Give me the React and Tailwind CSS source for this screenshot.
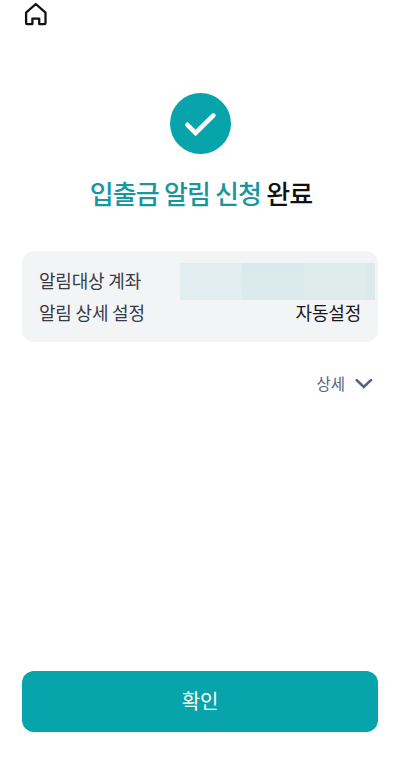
import React from 'react';

const HomeIcon = () => (
  <svg width="24" height="24" viewBox="0 0 24 24" fill="none" stroke="#111214" strokeWidth="2.3" strokeLinejoin="round">
    <path d="M2.1 10.6 11.8 2l9.7 8.6v10.3a1.2 1.2 0 0 1-1.2 1.2h-5.1v-5.5H8.4v5.5H3.3a1.2 1.2 0 0 1-1.2-1.2z" />
  </svg>
);

const CheckIcon = () => (
  <svg width="61" height="61" viewBox="0 0 61 61" fill="none" stroke="#ffffff" strokeWidth="4.6" strokeLinecap="round" strokeLinejoin="miter">
    <path d="M17.4 31.8 25.6 40 43.4 22.4" />
  </svg>
);

const ChevronIcon = () => (
  <svg width="18" height="12" viewBox="0 0 18 12" fill="none" stroke="#56637a" strokeWidth="2.7" strokeLinecap="round" strokeLinejoin="miter">
    <path d="M1.7 3.1 8.8 9.9l7.1-6.8" />
  </svg>
);

// Hidden account number, covered with pale tiles
const MaskedAccount = () => (
  <div className="absolute left-[158px] top-3 flex h-[37px] w-[195px]">
    <div className="w-[62px] bg-[#e1edee]"></div>
    <div className="w-[62px] bg-linear-to-b from-[#d8e8ee] to-[#dceceb]"></div>
    <div className="w-[62px] bg-[#deecec]"></div>
    <div className="w-[9px] bg-[#dceaea]"></div>
  </div>
);

const App = () => {
  return (
    <div className="flex h-[760px] w-[400px] flex-col bg-white px-[22px] font-['Noto_Sans_CJK_KR',sans-serif]">
      <header className="flex h-[93px] pl-0.5 pt-0.5">
        <HomeIcon />
      </header>

      <main className="flex flex-1 flex-col">
        <div className="ml-[148px] h-[61px] w-[61px] rounded-full bg-[#07a5ab]">
          <CheckIcon />
        </div>

        <h1 className="mt-[19px] whitespace-nowrap pl-0.5 text-center text-[26px] font-medium leading-10 tracking-[-0.85px] text-[#111111]">
          <span className="text-[#18989d]">입출금 알림 신청</span> 완료
        </h1>

        <section className="relative mt-[38px] h-[91px] rounded-xl bg-[#f3f4f6] px-[17px] pt-[13px] text-[18px] leading-8 tracking-[-0.2px]">
          <div className="text-[#363c47]">알림대상 계좌</div>
          <div className="flex justify-between">
            <span className="text-[#363c47]">알림 상세 설정</span>
            <span className="text-[#17181a]">자동설정</span>
          </div>
          <MaskedAccount />
        </section>

        <button className="mr-[5px] mt-7 flex items-center gap-[10px] self-end text-[15.5px] leading-[26px] text-[#56637a]">
          상세
          <ChevronIcon />
        </button>
      </main>

      <footer className="pb-7">
        <button className="h-[61px] w-full rounded-xl bg-[#07a5ab] pb-0.5 text-[20px] tracking-[-0.2px] text-white">
          확인
        </button>
      </footer>
    </div>
  );
};

export default App;
